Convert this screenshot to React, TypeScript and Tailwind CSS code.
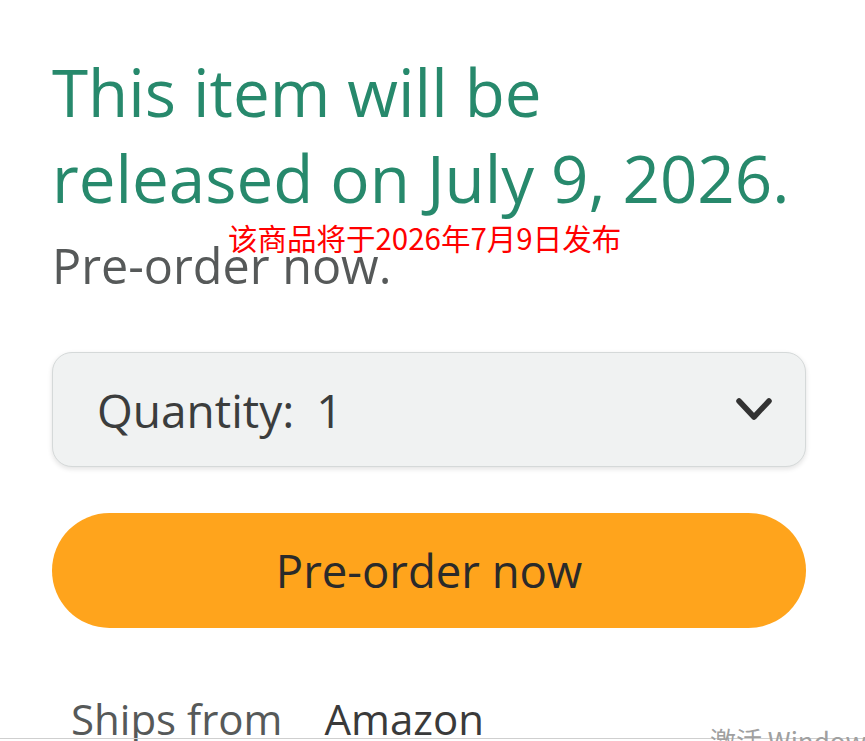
export default function App() {
  return (
    <div className="relative h-[741px] w-[865px] overflow-hidden bg-white font-['Open_Sans',sans-serif]">
      {/* ── Buy box ── */}
      <div className="w-[806px] pl-[52px] pt-[49px]">
        <h1 className="whitespace-nowrap text-[65.5px] leading-[86px] font-normal text-[#27896c]">
          This item will be
          <br />
          released on July 9, 2026.
        </h1>
        <p className="mt-[16px] text-[48.5px] leading-[56px] text-[#565959]">Pre-order now.</p>

        <div className="mt-[59px] flex h-[115px] w-[754px] items-center justify-between rounded-[20px] border border-[#d5d9d9] bg-[#f0f2f2] pl-[44px] pr-[32px] shadow-[0_2px_5px_rgba(15,17,17,0.12)]">
          <span className="text-[46px] leading-none text-[#3b3d3d]">
            Quantity:<span className="ml-[22px]">1</span>
          </span>
          <svg width="38" height="26" viewBox="0 0 38 26" fill="none">
            <polyline
              points="4,4 19,20 34,4"
              stroke="#333"
              strokeWidth="5.5"
              strokeLinecap="round"
              strokeLinejoin="round"
            />
          </svg>
        </div>

        <button
          type="button"
          className="mt-[46px] flex h-[115px] w-[754px] items-center justify-center rounded-full bg-[#ffa41c] text-[45.5px] leading-none text-[#2a2a2a]"
        >
          Pre-order now
        </button>

        <div className="mt-[66px] flex items-baseline gap-[42px] pl-[19px] text-[42px] leading-[50px]">
          <span className="text-[#565959]">Ships from</span>
          <span className="text-[#3a3a3a]">Amazon</span>
        </div>
      </div>

      {/* ── Overlays ── */}
      <span className="absolute left-[228px] top-[223px] font-['Noto_Sans_CJK_SC',sans-serif] text-[29.5px] leading-none whitespace-nowrap text-[#ff0000]">
        该商品将于2026年7月9日发布
      </span>
      <div className="absolute left-0 top-[738px] h-px w-full bg-[#cfcfcf]" />
      <span className="absolute left-[710px] top-[727px] font-['Noto_Sans_CJK_SC',sans-serif] text-[26px] leading-none whitespace-nowrap text-[#a0a0a0]">
        激活 Windows
      </span>
    </div>
  );
}
